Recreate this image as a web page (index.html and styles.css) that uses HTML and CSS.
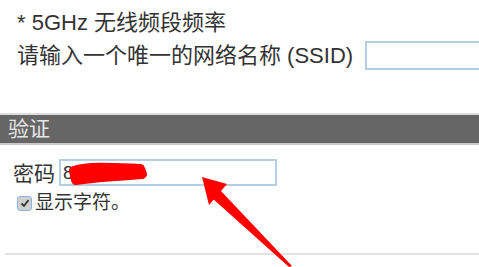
FILE: index.html
```html
<!DOCTYPE html>
<html lang="zh">
<head>
<meta charset="utf-8">
<link rel="stylesheet" href="styles.css">
</head>
<body>
<div class="page">
  <div class="top">
    <div class="line">* 5GHz 无线频段频率</div>
    <div class="line row"><span>请输入一个唯一的网络名称 (SSID)</span><span class="ssid"></span></div>
  </div>
  <div class="bar">验证</div>
  <div class="auth">
    <div class="pw-row">
      <span class="label">密码</span>
      <div class="pw"><span class="pw-text">8</span>
        <svg class="scribble" width="100" height="30" viewBox="0 0 100 30"><path d="M14 11 C 30 6, 55 8, 80 9 L 82 14 C 60 16, 35 17, 16 20 Z" fill="#f00" stroke="#f00" stroke-width="10" stroke-linejoin="round"/></svg>
      </div>
    </div>
    <div class="cb-row">
      <span class="cb"><svg width="10" height="10" viewBox="0 0 10 10"><path d="M1.5 5.5 L4 8 L8.5 2" fill="none" stroke="#333" stroke-width="1.8"/></svg></span>
      <span class="cb-label">显示字符。</span>
    </div>
  </div>
  <div class="rule"></div>
  <svg class="arrow" width="479" height="267" viewBox="0 0 479 267">
    <polygon points="202,177 227,184 209,205" fill="#f00"/>
    <polygon points="220,190 212,198 289,267 292,266" fill="#f00"/>
  </svg>
</div>
</body>
</html>
```

FILE: styles.css
```css
html, body {
  margin: 0;
  padding: 0;
  background: #fff;
  overflow: hidden;
}
.page {
  position: relative;
  width: 479px;
  height: 267px;
  overflow: hidden;
  font-family: "Liberation Sans", "Noto Sans CJK SC", sans-serif;
  color: #333;
}
.top {
  padding: 7px 0 0 17px;
}
.line {
  font-size: 22px;
  height: 32px;
  line-height: 32px;
  white-space: nowrap;
}
.row {
  display: flex;
  align-items: center;
  height: 33px;
}
.ssid {
  display: block;
  flex: none;
  margin-left: 12px;
  width: 130px;
  height: 25px;
  border: 2px solid #b6cde6;
  background: #fff;
}
.bar {
  margin-top: 41px;
  border-top: 2px solid #dcdcdc;
  border-bottom: 2px solid #cacaca;
  background: #666;
  height: 28px;
  line-height: 28px;
  font-size: 21px;
  color: #e6e6e6;
  padding-left: 8px;
}
.auth {
  padding-top: 12px;
}
.pw-row {
  display: flex;
  align-items: center;
  padding-left: 13px;
}
.label {
  font-size: 21px;
  width: 46px;
}
.pw {
  position: relative;
  width: 212px;
  height: 23px;
  border: 2px solid #b6cde6;
  font-size: 19px;
  line-height: 23px;
  padding-left: 2px;
}
.scribble {
  position: absolute;
  left: -1px;
  top: -1px;
}
.cb-row {
  display: flex;
  align-items: center;
  margin-top: 6px;
  padding-left: 17px;
}
.cb {
  display: flex;
  align-items: center;
  justify-content: center;
  width: 13px;
  height: 13px;
  border: 1.5px solid #8fb2e0;
  border-radius: 3px;
  background: #d0d0d0;
}
.cb-label {
  font-size: 19px;
  margin-left: 3px;
  line-height: 20px;
}
.rule {
  margin: 40px 0 0 5px;
  height: 2px;
  background: #e2e2e2;
}
.arrow {
  position: absolute;
  left: 0;
  top: 0;
}
```
